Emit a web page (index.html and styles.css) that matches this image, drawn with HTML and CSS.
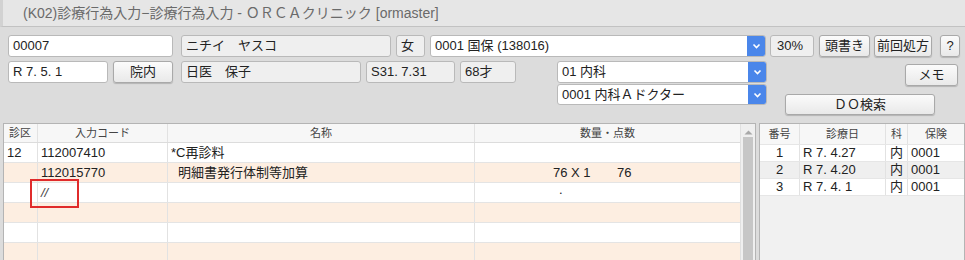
FILE: index.html
```html
<!DOCTYPE html>
<html lang="ja">
<head>
    <meta charset="UTF-8">
    <title>(K02)診療行為入力</title>
    <link rel="stylesheet" href="styles.css">
</head>
<body>
    <div class="titlebar">(K02)診療行為入力−診療行為入力 - ＯＲＣＡクリニック [ormaster]</div>

    <div class="form">
        <div class="row row1">
            <div class="field w-id">00007</div>
            <div class="field ro w-kana">ニチイ　ヤスコ</div>
            <div class="field ro w-sex">女</div>
            <div class="select w-ins"><span class="sel-text">0001 国保 (138016)</span><span class="sel-arrow"><svg width="9" height="6" viewBox="0 0 9 6"><polyline points="1.5,1.5 4.5,4.5 7.5,1.5" fill="none" stroke="#fff" stroke-width="1.6"/></svg></span></div>
            <div class="field ro w-rate">30%</div>
            <div class="btn w-head">頭書き</div>
            <div class="btn w-prev">前回処方</div>
            <div class="btn w-help">?</div>
        </div>

        <div class="row lower">
            <div class="patient">
                <div class="row">
                    <div class="field w-date">R 7. 5. 1</div>
                    <div class="btn w-in">院内</div>
                    <div class="field ro w-name">日医　保子</div>
                    <div class="field ro w-birth">S31. 7.31</div>
                    <div class="field ro w-age">68才</div>
                </div>
            </div>
            <div class="selects">
                <div class="select"><span class="sel-text">01 内科</span><span class="sel-arrow"><svg width="9" height="6" viewBox="0 0 9 6"><polyline points="1.5,1.5 4.5,4.5 7.5,1.5" fill="none" stroke="#fff" stroke-width="1.6"/></svg></span></div>
                <div class="select"><span class="sel-text">0001 内科Ａドクター</span><span class="sel-arrow"><svg width="9" height="6" viewBox="0 0 9 6"><polyline points="1.5,1.5 4.5,4.5 7.5,1.5" fill="none" stroke="#fff" stroke-width="1.6"/></svg></span></div>
            </div>
            <div class="side">
                <div class="btn w-memo">メモ</div>
                <div class="btn w-do">ＤＯ検索</div>
            </div>
        </div>
    </div>

    <div class="tables">
        <div class="panel main">
            <div class="grid">
                <div class="tr head">
                    <div class="td c-ku left">診区</div>
                    <div class="td c-code">入力コード</div>
                    <div class="td c-name">名称</div>
                    <div class="td c-qty">数量・点数</div>
                </div>
                <div class="tr">
                    <div class="td c-ku left">12</div>
                    <div class="td c-code left">112007410</div>
                    <div class="td c-name left">*C再診料</div>
                    <div class="td c-qty"></div>
                </div>
                <div class="tr odd">
                    <div class="td c-ku"></div>
                    <div class="td c-code left">112015770</div>
                    <div class="td c-name left indent">明細書発行体制等加算</div>
                    <div class="td c-qty qty"><span class="q1">76 X 1</span><span class="q2">76</span></div>
                </div>
                <div class="tr">
                    <div class="td c-ku"></div>
                    <div class="td c-code left slash">//</div>
                    <div class="td c-name"></div>
                    <div class="td c-qty qty"><span class="dot">.</span></div>
                </div>
                <div class="tr odd">
                    <div class="td c-ku"></div><div class="td c-code"></div><div class="td c-name"></div><div class="td c-qty"></div>
                </div>
                <div class="tr">
                    <div class="td c-ku"></div><div class="td c-code"></div><div class="td c-name"></div><div class="td c-qty"></div>
                </div>
                <div class="tr odd">
                    <div class="td c-ku"></div><div class="td c-code"></div><div class="td c-name"></div><div class="td c-qty"></div>
                </div>
            </div>
            <div class="scrollbar">
                <div class="sb-arrow"><svg width="9" height="5" viewBox="0 0 9 5"><polygon points="0.5,4.5 4.5,0.5 8.5,4.5" fill="#a8a8a8"/></svg></div>
                <div class="sb-thumb"></div>
            </div>
            <div class="focus-box"></div>
        </div>

        <div class="panel history">
            <div class="tr head">
                <div class="td h-no">番号</div>
                <div class="td h-date">診療日</div>
                <div class="td h-ka">科</div>
                <div class="td h-ins">保険</div>
            </div>
            <div class="tr">
                <div class="td h-no">1</div>
                <div class="td h-date left">R 7. 4.27</div>
                <div class="td h-ka">内</div>
                <div class="td h-ins left">0001</div>
            </div>
            <div class="tr alt">
                <div class="td h-no">2</div>
                <div class="td h-date left">R 7. 4.20</div>
                <div class="td h-ka">内</div>
                <div class="td h-ins left">0001</div>
            </div>
            <div class="tr">
                <div class="td h-no">3</div>
                <div class="td h-date left">R 7. 4. 1</div>
                <div class="td h-ka">内</div>
                <div class="td h-ins left">0001</div>
            </div>
        </div>
    </div>
</body>
</html>
```

FILE: styles.css
```css
* {
    box-sizing: border-box;
}
body {
    margin: 0;
    width: 965px;
    height: 260px;
    overflow: hidden;
    background: #dcdcdc;
    font-family: 'Liberation Sans', 'Noto Sans CJK JP', sans-serif;
    font-size: 13px;
    color: #222;
}
.titlebar {
    height: 27px;
    line-height: 26px;
    padding-left: 20px;
    background: #e6e6e6;
    border-bottom: 1px solid #c2c2c2;
    border-left: 3px solid #d2d2d2;
    color: #6a6a6a;
    font-size: 14px;
}
.form {
    padding: 8px 0 0 8px;
}
.row {
    display: flex;
    align-items: flex-start;
}
.row1 {
    height: 22px;
}
.field {
    height: 22px;
    line-height: 20px;
    padding-left: 4px;
    background: #fff;
    border: 1px solid #b9b9b9;
    border-radius: 3px;
    white-space: nowrap;
    overflow: hidden;
}
.field.ro {
    background: #efefef;
}
.btn {
    height: 22px;
    line-height: 20px;
    text-align: center;
    color: #222;
    background: linear-gradient(#fbfbfb, #e9e9e9);
    border: 1px solid #a9a9a9;
    border-radius: 3px;
    box-shadow: 0 1px 1px rgba(0, 0, 0, 0.18);
    white-space: nowrap;
}
.select {
    display: flex;
    height: 21px;
    background: #fff;
    border: 1px solid #b9b9b9;
    border-radius: 3px;
    overflow: hidden;
}
.sel-text {
    flex: 1;
    line-height: 19px;
    padding-left: 4px;
    white-space: nowrap;
}
.sel-arrow {
    width: 19px;
    margin: -1px -1px -1px 0;
    background: #4a86ea;
    display: flex;
    align-items: center;
    justify-content: center;
}

/* row 1 */
.w-id { width: 165px; }
.w-kana { width: 210px; margin-left: 8px; }
.w-sex { width: 29px; margin-left: 5px; }
.w-ins { width: 336px; height: 22px; margin-left: 5px; }
.w-ins .sel-text { line-height: 20px; }
.w-rate { width: 44px; margin-left: 4px; padding-left: 6px; }
.w-head { width: 51px; margin-left: 5px; }
.w-prev { width: 58px; margin-left: 4px; }
.w-help { width: 20px; margin-left: 8px; }

/* lower block */
.lower {
    margin-top: 4px;
    height: 54px;
}
.w-date { width: 100px; }
.w-in { width: 60px; margin-left: 5px; }
.w-name { width: 180px; margin-left: 8px; }
.w-birth { width: 89px; margin-left: 5px; }
.w-age { width: 56px; margin-left: 5px; }
.selects {
    width: 210px;
    margin-left: 41px;
    display: flex;
    flex-direction: column;
    gap: 1px;
}
.selects .select:first-child {
    height: 22px;
}
.selects .select:first-child .sel-text {
    line-height: 20px;
}
.side {
    width: 193px;
    display: flex;
    flex-direction: column;
    align-items: flex-start;
}
.w-memo {
    width: 53px;
    margin: 3px 0 0 138px;
}
.w-do {
    width: 150px;
    height: 21px;
    line-height: 19px;
    margin: 8px 0 0 18px;
}

/* tables */
.tables {
    display: flex;
    gap: 3px;
    margin-top: 8px;
    padding-left: 3px;
    height: 140px;
}
.panel {
    position: relative;
    border: 1px solid #b4b4b4;
    border-bottom: none;
}
.panel.main {
    width: 753px;
    display: flex;
    background: #fff;
}
.grid {
    width: 736px;
}
.tr {
    display: flex;
    height: 20px;
    background: #fff;
    border-bottom: 1px solid #e4e4e4;
}
.tr.odd {
    background: #fdeee1;
}
.tr.head {
    height: 19px;
    background: #f7f7f7;
    border-bottom: 1px solid #dcdcdc;
    font-size: 11px;
    color: #444;
}
.td {
    border-right: 1px solid #e2e2e2;
    text-align: center;
    line-height: 19px;
    white-space: nowrap;
    overflow: hidden;
}
.td.left {
    text-align: left;
    padding-left: 3px;
}
.c-ku { width: 34px; }
.c-code { width: 130px; }
.c-name { width: 307px; }
.c-qty { width: 265px; border-right: none; }
.head .c-ku { padding-left: 5px; }
.indent { padding-left: 10px !important; }
.slash {
    font-style: italic;
    color: #444;
}
.qty {
    position: relative;
    text-align: left;
}
.q1 { position: absolute; left: 78px; }
.q2 { position: absolute; left: 142px; }
.dot { position: absolute; left: 84px; top: -3px; }
.scrollbar {
    width: 15px;
    background: #efefef;
    border-left: 1px solid #e0e0e0;
    display: flex;
    flex-direction: column;
    align-items: center;
}
.sb-arrow {
    height: 13px;
    display: flex;
    align-items: center;
    padding-top: 3px;
}
.sb-thumb {
    width: 10px;
    flex: 1;
    background: #c6c6c6;
}
.focus-box {
    position: absolute;
    left: 26px;
    top: 55px;
    width: 49px;
    height: 29px;
    border: 2px solid #e02b2b;
}
.panel.history {
    flex: 1;
    background: #f1f1f1;
}
.history .tr {
    height: 17px;
    border-bottom: 1px solid #e6e6e6;
}
.history .tr.head {
    height: 21px;
    background: #f7f7f7;
    font-size: 11px;
}
.history .tr.head .td {
    line-height: 20px;
}
.history .tr.alt {
    background: #efefef;
}
.history .td {
    line-height: 16px;
}
.h-no { width: 40px; }
.h-date { width: 86px; }
.h-ka { width: 22px; }
.h-ins { flex: 1; border-right: none; }
```
